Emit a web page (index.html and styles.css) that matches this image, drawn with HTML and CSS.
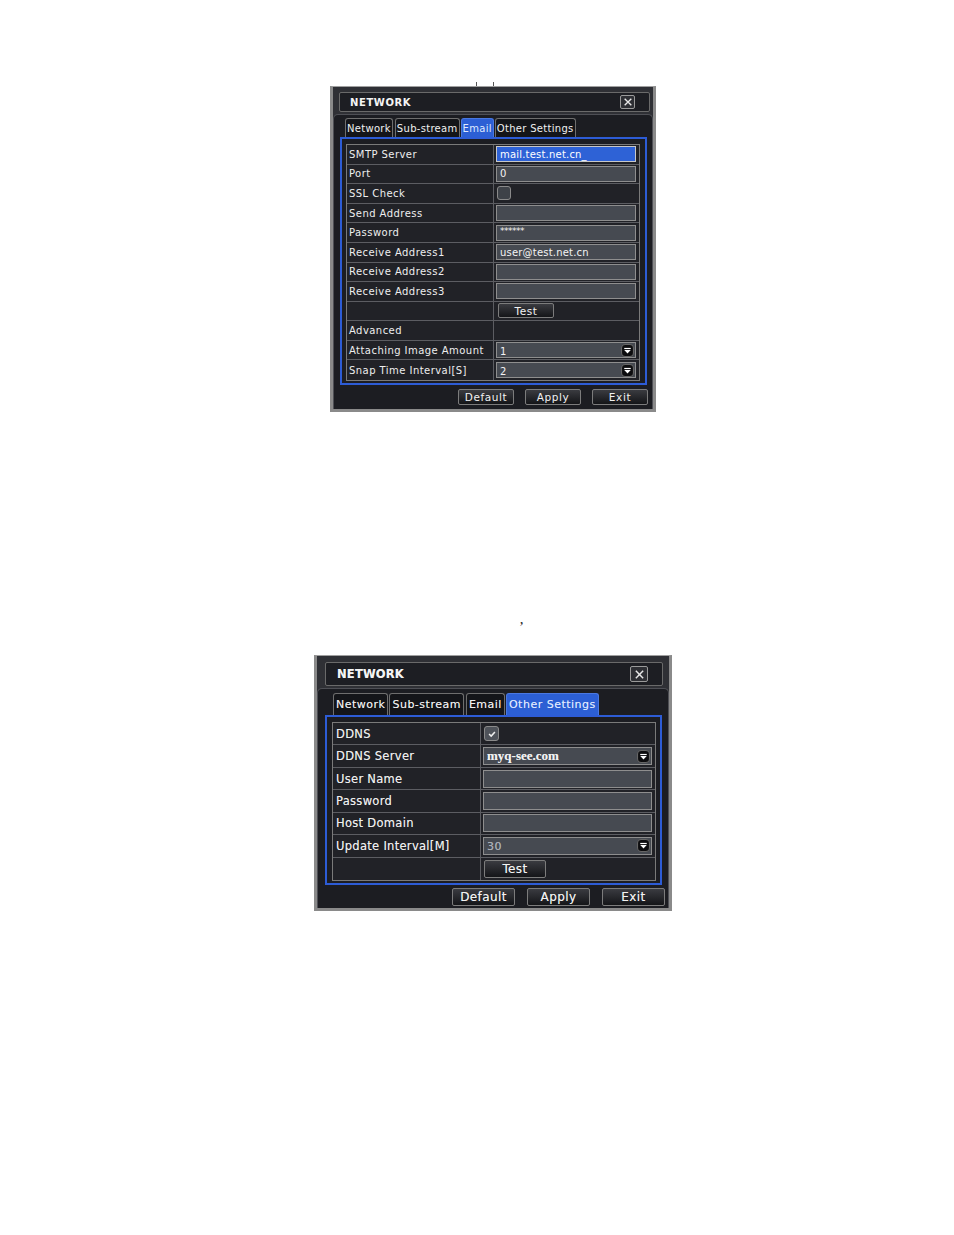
FILE: index.html
```html
<!DOCTYPE html>
<html>
<head>
<meta charset="utf-8">
<link rel="stylesheet" href="styles.css">
</head>
<body>
<div class="page">
  <div class="ticks"><span class="tick t1"></span><span class="tick t2"></span></div>

  <section class="win w1">
    <header class="titlebar">
      <span class="title">NETWORK</span>
      <span class="close"><svg viewBox="0 0 12 12" width="10" height="10"><path d="M2 2 L10 10 M10 2 L2 10" stroke="#e8e8e8" stroke-width="1.6" fill="none"/></svg></span>
    </header>
    <div class="body">
      <nav class="tabs">
        <span class="tab">Network</span>
        <span class="tab">Sub-stream</span>
        <span class="tab active">Email</span>
        <span class="tab">Other Settings</span>
      </nav>
      <div class="panel">
        <div class="grid">
          <div class="row"><span class="lbl">SMTP Server</span><span class="val"><span class="inp sel">mail.test.net.cn_</span></span></div>
          <div class="row"><span class="lbl">Port</span><span class="val"><span class="inp">0</span></span></div>
          <div class="row"><span class="lbl">SSL Check</span><span class="val"><span class="chk"></span></span></div>
          <div class="row"><span class="lbl">Send Address</span><span class="val"><span class="inp"></span></span></div>
          <div class="row"><span class="lbl">Password</span><span class="val"><span class="inp pw">******</span></span></div>
          <div class="row"><span class="lbl">Receive Address1</span><span class="val"><span class="inp">user@test.net.cn</span></span></div>
          <div class="row"><span class="lbl">Receive Address2</span><span class="val"><span class="inp"></span></span></div>
          <div class="row"><span class="lbl">Receive Address3</span><span class="val"><span class="inp"></span></span></div>
          <div class="row"><span class="lbl"></span><span class="val"><span class="btn test">Test</span></span></div>
          <div class="row"><span class="lbl">Advanced</span><span class="val"></span></div>
          <div class="row"><span class="lbl">Attaching Image Amount</span><span class="val"><span class="inp dd"><span class="ddtext">1</span><svg class="arrow" viewBox="0 0 12 12"><rect x="0.5" y="0.5" width="11" height="11" rx="3.5" fill="#0d0d0f" stroke="#666"/><rect x="3" y="3.6" width="6" height="1.1" fill="#fff"/><path d="M3 5.6 L9 5.6 L6 8.8 Z" fill="#fff"/></svg></span></span></div>
          <div class="row"><span class="lbl">Snap Time Interval[S]</span><span class="val"><span class="inp dd"><span class="ddtext">2</span><svg class="arrow" viewBox="0 0 12 12"><rect x="0.5" y="0.5" width="11" height="11" rx="3.5" fill="#0d0d0f" stroke="#666"/><rect x="3" y="3.6" width="6" height="1.1" fill="#fff"/><path d="M3 5.6 L9 5.6 L6 8.8 Z" fill="#fff"/></svg></span></span></div>
        </div>
      </div>
      <div class="actions">
        <span class="btn">Default</span>
        <span class="btn">Apply</span>
        <span class="btn">Exit</span>
      </div>
    </div>
  </section>

  <div class="apos">&#8217;</div>

  <section class="win w2">
    <header class="titlebar">
      <span class="title">NETWORK</span>
      <span class="close"><svg viewBox="0 0 12 12" width="11" height="11"><path d="M2 2 L10 10 M10 2 L2 10" stroke="#e8e8e8" stroke-width="1.6" fill="none"/></svg></span>
    </header>
    <div class="body">
      <nav class="tabs">
        <span class="tab">Network</span>
        <span class="tab">Sub-stream</span>
        <span class="tab">Email</span>
        <span class="tab active">Other Settings</span>
      </nav>
      <div class="panel">
        <div class="grid">
          <div class="row"><span class="lbl">DDNS</span><span class="val"><span class="chk on"><svg viewBox="0 0 12 12" width="10" height="10"><path d="M2.5 6 L5 8.5 L9.5 3.5" stroke="#f0f0f0" stroke-width="1.8" fill="none"/></svg></span></span></div>
          <div class="row"><span class="lbl">DDNS Server</span><span class="val"><span class="inp dd"><span class="ddtext serif">myq-see.com</span><svg class="arrow" viewBox="0 0 12 12"><rect x="0.5" y="0.5" width="11" height="11" rx="3.5" fill="#0d0d0f" stroke="#666"/><rect x="3" y="3.6" width="6" height="1.1" fill="#fff"/><path d="M3 5.6 L9 5.6 L6 8.8 Z" fill="#fff"/></svg></span></span></div>
          <div class="row"><span class="lbl">User Name</span><span class="val"><span class="inp"></span></span></div>
          <div class="row"><span class="lbl">Password</span><span class="val"><span class="inp"></span></span></div>
          <div class="row"><span class="lbl">Host Domain</span><span class="val"><span class="inp"></span></span></div>
          <div class="row"><span class="lbl">Update Interval[M]</span><span class="val"><span class="inp dd"><span class="ddtext dim">30</span><svg class="arrow" viewBox="0 0 12 12"><rect x="0.5" y="0.5" width="11" height="11" rx="3.5" fill="#0d0d0f" stroke="#666"/><rect x="3" y="3.6" width="6" height="1.1" fill="#fff"/><path d="M3 5.6 L9 5.6 L6 8.8 Z" fill="#fff"/></svg></span></span></div>
          <div class="row"><span class="lbl"></span><span class="val"><span class="btn test">Test</span></span></div>
        </div>
      </div>
      <div class="actions">
        <span class="btn">Default</span>
        <span class="btn">Apply</span>
        <span class="btn">Exit</span>
      </div>
    </div>
  </section>
</div>
</body>
</html>
```

FILE: styles.css
```css
html, body {
  margin: 0;
  padding: 0;
  background: #ffffff;
}

.page {
  width: 954px;
  height: 1235px;
  padding-top: 80px;
  box-sizing: border-box;
  display: flex;
  flex-direction: column;
  font-family: "DejaVu Sans", "Liberation Sans", sans-serif;
}

.ticks {
  height: 6px;
  position: relative;
}
.tick {
  position: absolute;
  top: 2px;
  width: 1px;
  height: 4px;
  background: #555;
}
.t1 { left: 476px; }
.t2 { left: 493px; }

/* ---------- window shell ---------- */
.win {
  box-sizing: border-box;
  background: #2f3035;
  border: 3px solid #8a8a8a;
  border-top: 1px solid #a0a0a0;
  display: flex;
  flex-direction: column;
  color: #f2f2f2;
}

.titlebar {
  box-sizing: border-box;
  display: flex;
  align-items: center;
  justify-content: space-between;
  background: #1d1e23;
  border: 1px solid #6a6a6a;
  border-radius: 2px;
}
.title {
  font-weight: bold;
  letter-spacing: 0.6px;
  color: #f4f4f4;
}
.close {
  box-sizing: border-box;
  display: flex;
  align-items: center;
  justify-content: center;
  border: 1px solid #9a9a9a;
  border-radius: 2px;
  background: #2e2f34;
}

.body {
  flex: 1;
  box-sizing: border-box;
  background: #1c1d22;
  border: 1px solid #4e4f55;
  border-bottom: none;
  border-radius: 5px 5px 0 0;
  display: flex;
  flex-direction: column;
}

.tabs {
  display: flex;
}
.tab {
  box-sizing: border-box;
  display: flex;
  align-items: center;
  justify-content: center;
  background: #141519;
  border: 1px solid #6e6e6e;
  border-bottom: none;
  border-radius: 3px 3px 0 0;
  color: #f0f0f0;
  white-space: nowrap;
}
.tab.active {
  background: #2c5fd4;
  color: #dfe8ff;
  border-color: #4a78e0;
}

.panel {
  box-sizing: border-box;
  border: 2px solid #2d5cd6;
  background: #1c1d22;
}

.grid {
  box-sizing: border-box;
  display: grid;
  grid-auto-rows: 1fr;
  border: 1px solid #7a7a7a;
  background: #212227;
}
.row {
  display: grid;
  border-bottom: 1px solid #5c5d62;
}
.row:last-child { border-bottom: none; }

.lbl {
  display: flex;
  align-items: center;
  padding-left: 2px;
  border-right: 1px solid #5c5d62;
  white-space: nowrap;
  color: #eeeeee;
}
.val {
  display: flex;
  align-items: center;
  padding-left: 2px;
  padding-right: 3px;
}

.inp {
  box-sizing: border-box;
  flex: 1;
  display: flex;
  align-items: center;
  background: #464a51;
  border: 1px solid #8e8e8e;
  color: #f4f4f4;
  padding-left: 3px;
  white-space: nowrap;
}
.inp.sel {
  background: #2e62d6;
  border-color: #c8c8c8;
  color: #ffffff;
}
.inp.pw {
  letter-spacing: -0.5px;
  align-items: flex-start;
}
.inp.dd {
  justify-content: space-between;
  padding-right: 1px;
}
.ddtext { padding-top: 2px; }
.ddtext.serif {
  font-family: "Liberation Serif", "DejaVu Serif", serif;
  font-weight: bold;
  padding-top: 0;
  color: #f2f2f2;
  letter-spacing: 0;
}
.ddtext.dim { color: #a9adb4; }

.arrow { display: block; }

.chk {
  box-sizing: border-box;
  display: flex;
  align-items: center;
  justify-content: center;
  background: #3e4248;
  border: 1px solid #8a8a8a;
  border-radius: 3px;
}
.chk.on { background: #4f535a; }

.btn {
  box-sizing: border-box;
  display: flex;
  align-items: center;
  justify-content: center;
  background: linear-gradient(#3a3b40, #141518);
  border: 1px solid #7c7c7c;
  border-radius: 2px;
  color: #f2f2f2;
}

.actions {
  display: flex;
  justify-content: flex-end;
}

/* ---------- window 1 : Email ---------- */
.w1 {
  margin-left: 330px;
  width: 326px;
  height: 326px;
  font-size: 10px;
  letter-spacing: 0.45px;
}
.w1 .titlebar {
  margin: 5px 3px 0 6px;
  height: 20px;
  padding: 0 14px 0 10px;
}
.w1 .title { font-size: 10px; letter-spacing: 0.6px; }
.w1 .close { width: 15px; height: 14px; }
.w1 .body {
  margin-top: 2px;
  padding: 3px 0 0 0;
}
.w1 .tabs {
  padding-left: 11px;
  gap: 1px;
  height: 19px;
}
.w1 .tab { height: 19px; padding: 0 1px; font-size: 10px; letter-spacing: 0.3px; }
.w1 .tab:nth-child(2) { margin-left: 1px; }
.w1 .panel {
  margin-left: 6px;
  width: 307px;
  height: 248px;
  padding: 5px 5px 2px 4px;
}
.w1 .grid { height: 237px; }
.w1 .row { grid-template-columns: 147px 1fr; }
.w1 .inp { height: 16px; font-size: 10px; letter-spacing: 0.2px; }
.w1 .inp.pw { font-size: 9px; letter-spacing: -0.5px; }
.w1 .chk { width: 14px; height: 14px; margin-left: 1px; }
.w1 .arrow { width: 13px; height: 13px; }
.w1 .btn { height: 16px; width: 56px; font-size: 10.5px; letter-spacing: 0.6px; }
.w1 .btn.test { margin-left: 2px; height: 15px; }
.w1 .actions {
  margin-top: 4px;
  padding-right: 4px;
  gap: 11px;
}

/* ---------- window 2 : Other Settings ---------- */
.apos {
  margin-top: 208px;
  margin-left: 519px;
  height: 14px;
  font-family: "Liberation Serif", serif;
  font-size: 15px;
  line-height: 14px;
  color: #222;
}

.w2 {
  margin-top: 21px;
  margin-left: 314px;
  width: 358px;
  height: 256px;
  font-size: 11px;
  letter-spacing: 0.5px;
  text-shadow: 0 0 0.3px rgba(255,255,255,0.5);
}
.w2 .titlebar {
  margin: 6px 6px 0 8px;
  height: 24px;
  padding: 0 14px 0 11px;
}
.w2 .title { font-size: 11.5px; letter-spacing: 0.2px; }
.w2 .close { width: 18px; height: 16px; }
.w2 .body {
  margin-top: 2px;
  padding: 4px 0 0 0;
}
.w2 .tabs {
  padding-left: 15px;
  gap: 1px;
  height: 22px;
}
.w2 .tab { height: 22px; padding: 0 2px; font-size: 11px; letter-spacing: 0.5px; }
.w2 .tab:nth-child(3) { margin-left: 1px; }
.w2 .panel {
  margin-left: 7px;
  width: 337px;
  height: 170px;
  padding: 5px 4px 2px 5px;
}
.w2 .grid { height: 159px; }
.w2 .row { grid-template-columns: 148px 1fr; }
.w2 .lbl { font-size: 11.5px; padding-left: 3px; letter-spacing: 0.3px; }
.w2 .inp { height: 18px; font-size: 11px; }
.w2 .ddtext.serif { font-size: 13px; }
.w2 .chk { width: 15px; height: 15px; margin-left: 1px; }
.w2 .arrow { width: 13px; height: 13px; }
.w2 .btn { height: 18px; width: 63px; font-size: 12px; letter-spacing: 0.4px; }
.w2 .btn.test { width: 62px; margin-left: 1px; font-size: 12px; }
.w2 .actions {
  margin-top: 3px;
  padding-right: 3px;
  gap: 12px;
}
```
